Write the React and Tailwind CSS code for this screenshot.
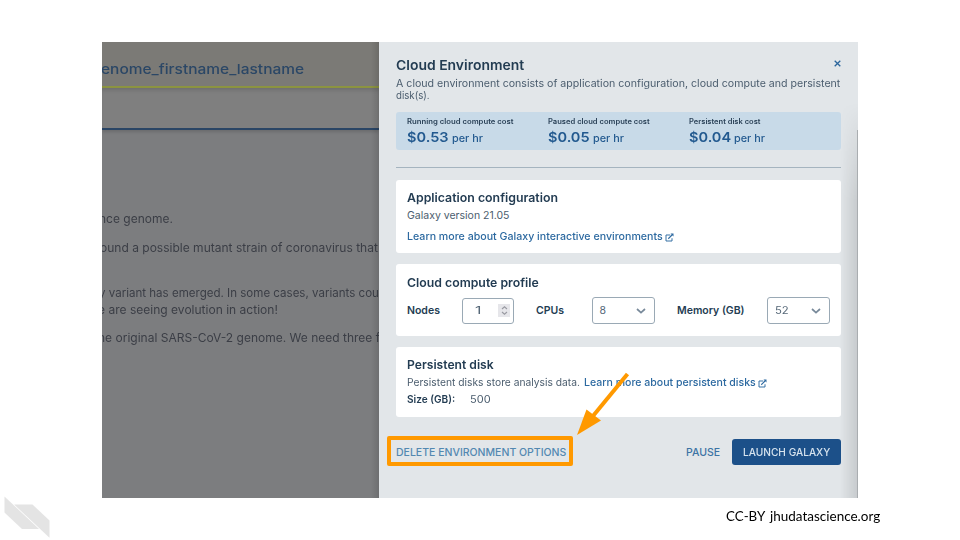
import { useLayoutEffect, useRef, useState } from 'react';

// A single line of text stretched horizontally to the given width.
function Line({ w, className = '', children }) {
  const ref = useRef(null);
  const [scale, setScale] = useState(1);
  useLayoutEffect(() => {
    setScale(w / ref.current.offsetWidth);
  }, [w]);
  return (
    <div className={`whitespace-nowrap shrink-0 ${className}`} style={{ width: w }}>
      <span ref={ref} className="inline-block origin-left" style={{ transform: `scaleX(${scale})` }}>
        {children}
      </span>
    </div>
  );
}

function ExternalIcon() {
  return (
    <svg className="w-[9px] h-[9px] shrink-0" viewBox="0 0 18 18" fill="none" stroke="currentColor" strokeWidth="1.9">
      <path d="M10.5 4H2V16H14V10.5" />
      <path d="M6.5 11.5L14.5 3.5" strokeWidth="2.2" />
      <path d="M11 1H17V7Z" fill="currentColor" stroke="none" />
    </svg>
  );
}

function Cost({ label, w, price }) {
  return (
    <div className="w-[141px] text-[#22598f]">
      <Line w={w} className="text-[7px] leading-[10px] font-semibold text-[#2b4258]">{label}</Line>
      <div className="flex items-baseline gap-[3px] mt-[1px]">
        <Line w={42} className="text-[13.5px] leading-[18px] font-semibold">{price}</Line>
        <Line w={31} className="text-[10.5px] leading-[18px] font-medium">per hr</Line>
      </div>
    </div>
  );
}

function Select({ value, w }) {
  return (
    <div className="flex w-[63px] h-[27px] shrink-0 items-center justify-between rounded-[3px] border border-[#9aa9b5] pl-[7px] pr-2 text-[#566878]">
      <Line w={w} className="text-[10.5px] leading-4">{value}</Line>
      <svg className="w-[10px] h-[6px]" viewBox="0 0 10 6" fill="none" stroke="#78899a" strokeWidth="1.7">
        <path d="M1 1L5 4.6L9 1" />
      </svg>
    </div>
  );
}

function Workspace() {
  return (
    <div className="relative w-[277px] h-full shrink-0 overflow-hidden bg-[#7c7d7f] text-[#3b3e46]">
      <div className="h-[46px] border-b-2 border-[#8c9440] bg-[#7b7a76] pt-[18px]">
        <Line w={203} className="-ml-[1px] text-[13.5px] leading-[18px] font-medium text-[#2b4766]">enome_firstname_lastname</Line>
      </div>
      <div className="h-[42px] border-b-2 border-[#2a4565] bg-[#7f7f7f] shadow-[0_2px_3px_rgba(0,0,0,0.14),inset_0_4px_4px_-2px_rgba(0,0,0,0.14)]" />
      <div className="pt-[81px] text-[11.5px] leading-[17px]">
        <Line w={74} className="-ml-[3px]">nce genome.</Line>
        <Line w={278} className="-ml-[2px] mt-[12px]">ound a possible mutant strain of coronavirus that</Line>
        <Line w={280} className="-ml-[3px] mt-[28px]">y variant has emerged. In some cases, variants cou</Line>
        <Line w={180} className="-ml-[4px]">e are seeing evolution in action!</Line>
        <Line w={282} className="-ml-[4px] mt-[11px]">he original SARS-CoV-2 genome. We need three f</Line>
      </div>
      <div className="absolute inset-y-0 right-0 w-2 bg-linear-to-r from-transparent to-black/12" />
    </div>
  );
}

function Drawer() {
  return (
    <div className="relative w-[479px] h-full shrink-0 bg-[#e2e6e9] px-[17px] text-[#4b5d6e]">
      <div className="flex justify-between pt-[14px]">
        <Line w={128} className="text-[13.5px] leading-[18px] font-semibold text-[#233c52]">Cloud Environment</Line>
        <svg className="mt-[4px] w-[7px] h-[7px]" viewBox="0 0 7 7" stroke="#2a659c" strokeWidth="1.3">
          <path d="M0.7 0.7L6.3 6.3M6.3 0.7L0.7 6.3" />
        </svg>
      </div>
      <div className="mt-1 text-[10.5px] leading-[11.5px]">
        <Line w={444}>A cloud environment consists of application configuration, cloud compute and persistent</Line>
        <Line w={34}>disk(s).</Line>
      </div>
      <div className="mt-[11px] flex h-[38px] rounded-[3px] bg-[#c8dae8] pl-[11px] pt-[5px]">
        <Cost label="Running cloud compute cost" w={107} price="$0.53" />
        <Cost label="Paused cloud compute cost" w={102} price="$0.05" />
        <Cost label="Persistent disk cost" w={71} price="$0.04" />
      </div>
      <div className="mt-[17px] h-px bg-[#a5b4bf]" />

      <div className="mt-[12px] h-[73px] rounded-[3px] bg-white pl-[11px] pt-[9px]">
        <Line w={151} className="text-[12px] leading-[18px] font-semibold text-[#233c52]">Application configuration</Line>
        <Line w={103} className="text-[10.5px] leading-[18px]">Galaxy version 21.05</Line>
        <div className="mt-[3px] flex items-center gap-[2px] text-[#2c69a0]">
          <Line w={256} className="text-[10.5px] leading-[18px] font-medium">Learn more about Galaxy interactive environments</Line>
          <ExternalIcon />
        </div>
      </div>

      <div className="mt-[11px] h-[72px] rounded-[3px] bg-white pl-[11px] pt-[10px]">
        <Line w={132} className="text-[12px] leading-[18px] font-semibold text-[#233c52]">Cloud compute profile</Line>
        <div className="mt-[5px] flex items-center text-[10.5px] leading-4 text-[#233c52]">
          <Line w={33} className="pt-px font-semibold">Nodes</Line>
          <div className="ml-[22px] flex w-[52px] h-[26px] shrink-0 items-center justify-between rounded-[3px] border border-[#9aa9b5] pl-[12px] pr-[3px] text-[#566878]">
            <Line w={6}>1</Line>
            <div className="flex h-[13px] w-3 items-center justify-center bg-[#e6e6ea]">
              <svg className="w-[7px] h-[9px]" viewBox="0 0 7 9" fill="none" stroke="#999aa2" strokeWidth="1.1">
                <path d="M1 3L3.5 0.8L6 3M1 6L3.5 8.2L6 6" />
              </svg>
            </div>
          </div>
          <Line w={28} className="ml-[22px] pt-px font-semibold">CPUs</Line>
          <div className="ml-[27.5px]"><Select value="8" w={7} /></div>
          <Line w={68} className="ml-[22.5px] pt-px font-semibold">Memory (GB)</Line>
          <div className="ml-[22px]"><Select value="52" w={14} /></div>
        </div>
      </div>

      <div className="mt-[11px] h-[70px] rounded-[3px] bg-white pl-[11px] pt-[9px]">
        <Line w={87} className="text-[12px] leading-[18px] font-semibold text-[#233c52]">Persistent disk</Line>
        <div className="flex items-center text-[10.5px] leading-[18px]">
          <Line w={173}>Persistent disks store analysis data.</Line>
          <Line w={172} className="ml-[3.5px] mr-[2px] font-medium text-[#2c69a0]">Learn more about persistent disks</Line>
          <div className="text-[#2c69a0]"><ExternalIcon /></div>
        </div>
        <div className="-mt-[1px] flex text-[10.5px] leading-[18px]">
          <Line w={48} className="font-semibold text-[#233c52]">Size (GB):</Line>
          <Line w={21} className="ml-[15px]">500</Line>
        </div>
      </div>

      <div className="mt-[22px] flex h-[26px] items-center text-[10.5px] leading-[18px] font-medium">
        <Line w={170} className="pt-px text-[#5288b1]">DELETE ENVIRONMENT OPTIONS</Line>
        <Line w={34} className="ml-auto pt-px text-[#3c73a4]">PAUSE</Line>
        <div className="ml-3 flex h-[26px] w-[109px] items-center justify-center rounded-[3px] bg-[#1c5089] text-[#d6e3ee]">
          <Line w={87} className="pt-px">LAUNCH GALAXY</Line>
        </div>
      </div>

      {/* page shadow showing along the right edge */}
      <div className="absolute right-0 bottom-0 top-[60px] w-[18px] bg-linear-to-r from-transparent to-black/12 mask-t-from-75% mask-t-to-100%" />
      <div className="absolute right-0 bottom-0 top-[88px] w-px bg-[#a9adb0]" />
    </div>
  );
}

export default function App() {
  return (
    <div className="relative flex h-[540px] w-[960px] flex-col overflow-hidden bg-white pt-[42px] font-[Inter,'Noto_Sans',sans-serif]">
      <div className="ml-[102px] flex h-[456px] w-[756px] overflow-hidden">
        <Workspace />
        <Drawer />
      </div>
      <div className="ml-[726px] mt-[9px] flex gap-[5px] font-[Lato,sans-serif] text-[13px] leading-[18px] text-black">
        <Line w={39}>CC-BY</Line>
        <Line w={110}>jhudatascience.org</Line>
      </div>

      {/* annotation */}
      <div className="absolute left-[386.5px] top-[436px] h-[30px] w-[186px] rounded-[2px] border-4 border-[#ff9900]" />
      <svg className="absolute left-[570px] top-[366px] h-[74px] w-[64px]" viewBox="570 366 64 74">
        <path d="M627.5 374L593 416" stroke="#ff9900" strokeWidth="4" />
        <path d="M577 435L586.5 409.5L601 420.5Z" fill="#ff9900" />
      </svg>

      {/* brand mark */}
      <svg className="absolute left-0 top-[490px] h-[50px] w-[56px]" viewBox="0 490 56 50" fill="#e4e4e4">
        <path d="M4.5 496.5L39 529H22L4.5 512.5Z" />
        <path d="M14.1 504.5H32.5L49.5 520.5V537.7Z" />
      </svg>
    </div>
  );
}
